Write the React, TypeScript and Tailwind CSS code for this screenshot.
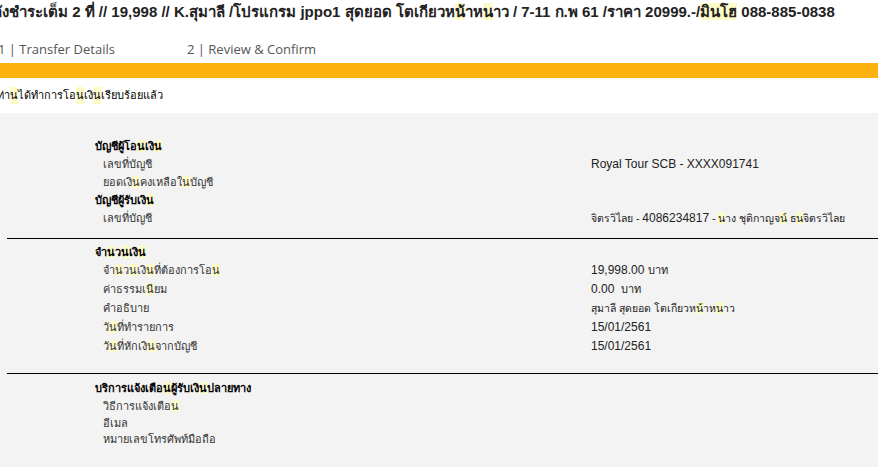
const hl = "bg-[#fdfbc8]";

function H({ children }: { children: React.ReactNode }) {
  return <span className={hl}>{children}</span>;
}

type Row = { label: React.ReactNode; value?: React.ReactNode };

function Section({
  title,
  rows,
  rowClass,
}: {
  title: React.ReactNode;
  rows: Row[];
  rowClass: string;
}) {
  return (
    <>
      <div className="col-span-2 font-bold text-[11px] text-black h-[18px] leading-[18px]">{title}</div>
      {rows.map((r, i) => (
        <div key={i} className="contents">
          <div className={`pl-[8px] text-[11px] text-[#333] ${rowClass}`}>{r.label}</div>
          <div className={`text-[12px] text-[#222] ${rowClass}`}>{r.value}</div>
        </div>
      ))}
    </>
  );
}

export default function App() {
  return (
    <div className="w-[878px] h-[467px] overflow-hidden bg-white font-['Liberation_Sans','Noto_Sans',sans-serif]">
      {/* title */}
      <div className="h-[36px] pt-[1px] whitespace-nowrap ml-[-7px] text-[15px] font-bold text-[#222] leading-[22px]">
        ลังชำระเต็ม 2 ที่ // 19,998 // K.สุมาลี /โปรแกรม jppo1 สุดยอด โตเกียวห<H>น้</H>าห<H>น</H>าว / 7-11 ก.พ 61 /ราคา 20999.-/<H>มินโฮ</H> 088-885-0838
      </div>

      {/* steps */}
      <div className="flex h-[27px] items-center text-[13px] text-[#555] font-['Open_Sans',sans-serif] whitespace-nowrap">
        <div className="w-[189px] ml-[-2px]">1 | Transfer Details</div>
        <div>2 | Review &amp; Confirm</div>
      </div>

      <div className="h-[15px] bg-[#fdb10f]" />

      <div className="h-[35px] flex items-center ml-[-3px] text-[11px] text-black whitespace-nowrap">
        ท่า<H>น</H>ได้ทำการโอ<H>น</H>เงิ<H>น</H>เรียบร้อยแล้ว
      </div>

      {/* panel */}
      <div className="bg-[#f3f3f3] h-full pt-[24px]">
        <div className="grid grid-cols-[496px_1fr] pl-[95px]">
          <Section
            title={<>บัญชีผู้โอ<H>น</H>เงิ<H>น</H></>}
            rowClass="h-[18px] leading-[18px]"
            rows={[
              { label: "เลขที่บัญชี", value: "Royal Tour SCB - XXXX091741" },
              { label: <>ยอดเงิ<H>น</H>คงเหลือใ<H>น</H>บัญชี</> },
            ]}
          />
          <Section
            title={<>บัญชีผู้รับเงิ<H>น</H></>}
            rowClass="h-[18px] leading-[18px]"
            rows={[
              {
                label: "เลขที่บัญชี",
                value: (
                  <span className="text-[10.5px]">
                    จิตรวิไลย - <span className="text-[12px]">4086234817</span> - <H>น</H>าง ชุติกาญจ<H>น์</H> ธ<H>น</H>จิตรวิไลย
                  </span>
                ),
              },
            ]}
          />
        </div>

        <div className="ml-[7px] mt-[11px] border-t border-black" />

        <div className="grid grid-cols-[496px_1fr] pl-[95px] pt-[4px]">
          <Section
            title={<>จำ<H>น</H>ว<H>น</H>เงิ<H>น</H></>}
            rowClass="h-[19px] leading-[19px]"
            rows={[
              { label: <>จำ<H>น</H>ว<H>น</H>เงิ<H>น</H>ที่ต้องการโอ<H>น</H></>, value: <>19,998.00 <span className="text-[11px]">บาท</span></> },
              { label: <>ค่าธรรมเ<H>นี</H>ยม</>, value: <>0.00 &nbsp;<span className="text-[11px]">บาท</span></> },
              { label: "คำอธิบาย", value: <span className="text-[10.5px]">สุมาลี สุดยอด โตเกียวห<H>น้</H>าห<H>น</H>าว</span> },
              { label: <>วั<H>น</H>ที่ทำรายการ</>, value: "15/01/2561" },
              { label: <>วั<H>น</H>ที่หักเงิ<H>น</H>จากบัญชี</>, value: "15/01/2561" },
            ]}
          />
        </div>

        <div className="ml-[7px] mt-[17px] border-t border-black" />

        <div className="pl-[95px] pt-[5px] text-[11px]">
          <div className="font-bold text-black h-[18px] leading-[18px]">
            บริการแจ้งเตือ<H>น</H>ผู้รับเงิ<H>น</H>ปลายทาง
          </div>
          <div className="pl-[8px] text-[#333] leading-[16px]">
            <div className="h-[18px] leading-[18px]">วิธีการแจ้งเตือ<H>น</H></div>
            <div>อีเมล</div>
            <div>หมายเลขโทรศัพท์มือถือ</div>
          </div>
        </div>
      </div>
    </div>
  );
}
